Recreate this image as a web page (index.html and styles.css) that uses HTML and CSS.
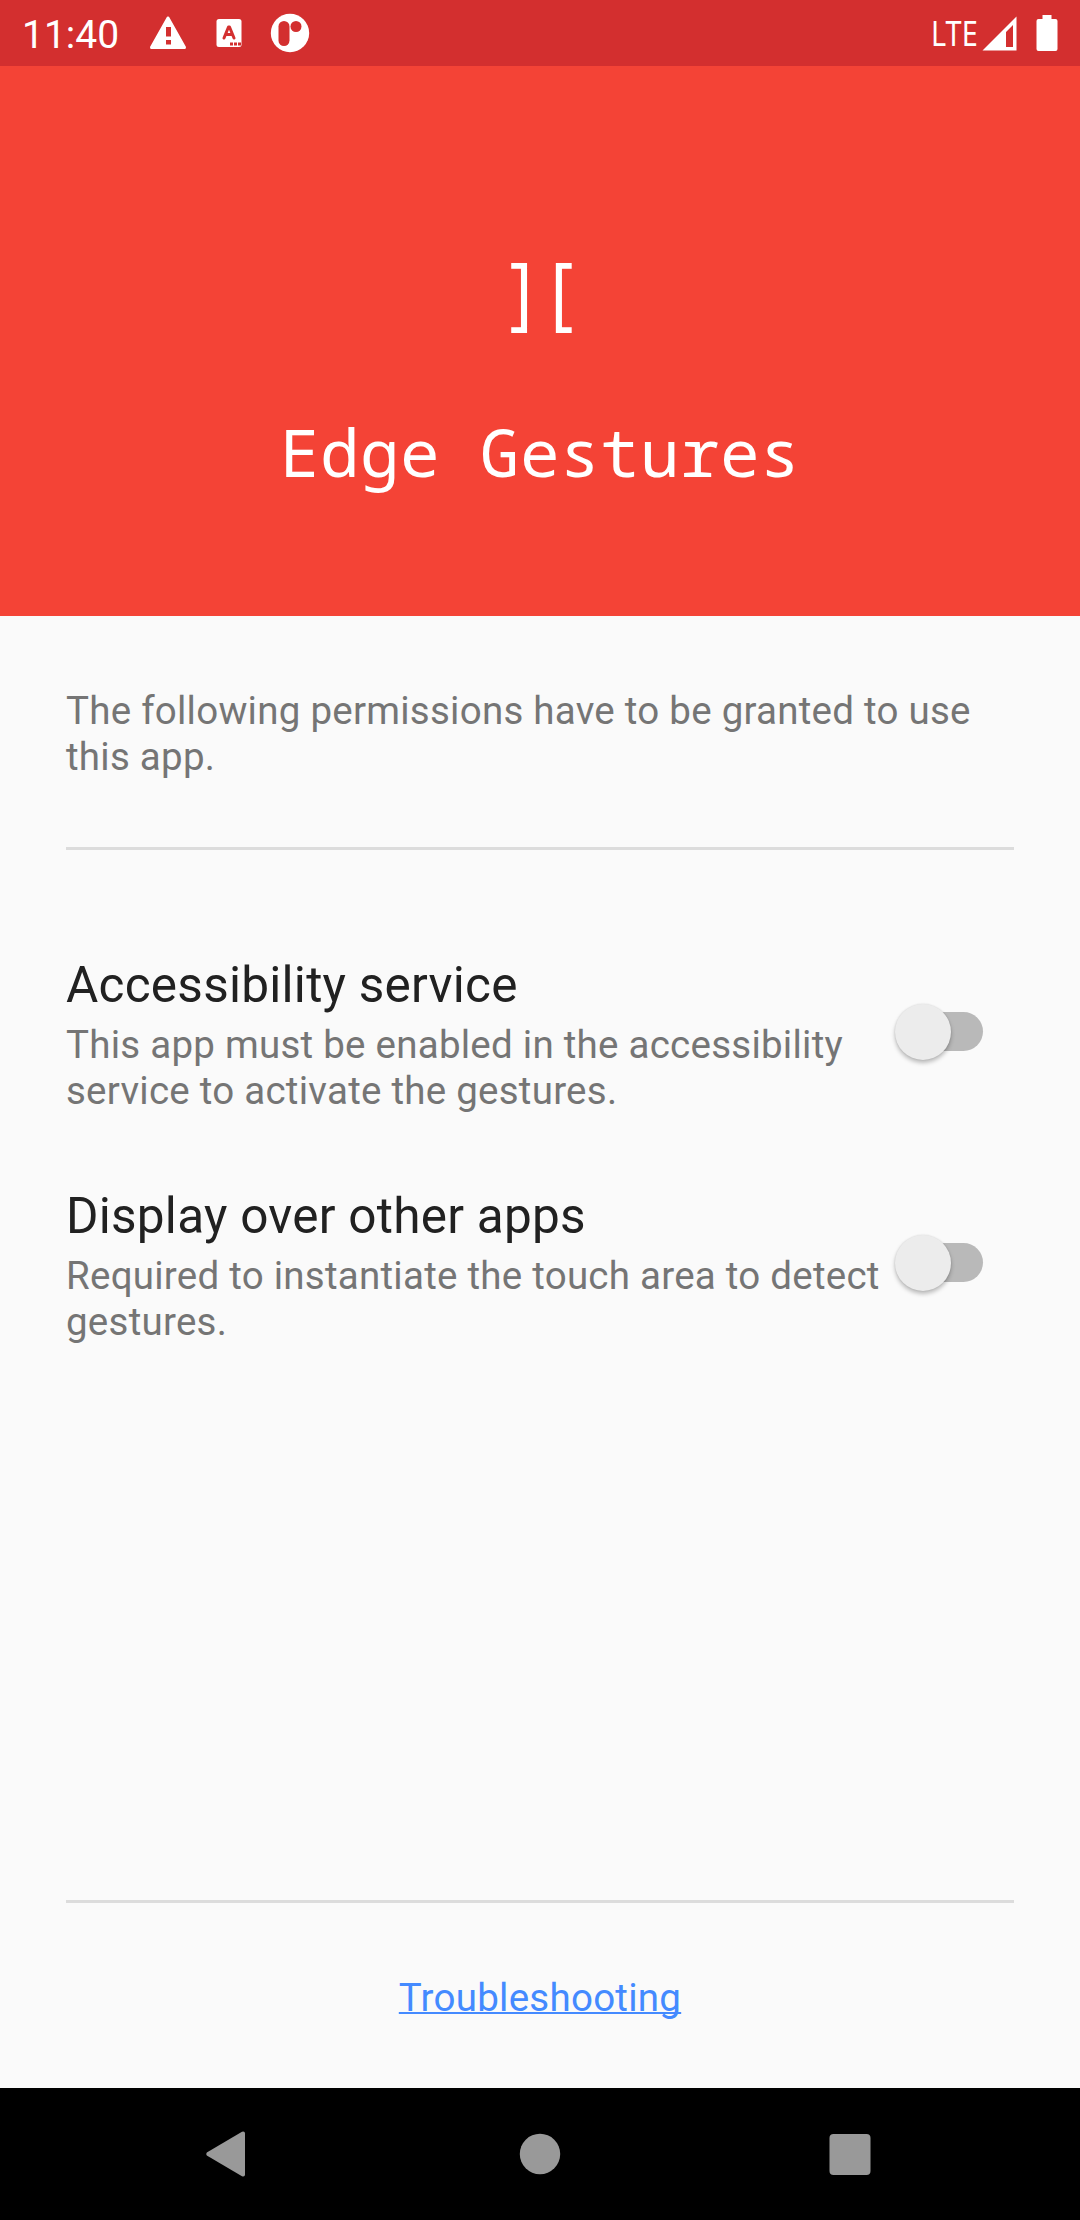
FILE: index.html
```html
<!DOCTYPE html>
<html lang="en">
<head>
<meta charset="utf-8">
<title>Edge Gestures</title>
<link rel="stylesheet" href="styles.css">
</head>
<body>
<div class="screen">
  <header class="status-bar">
    <span class="clock">11:40</span>
    <svg class="warning-icon" width="38" height="34" viewBox="0 0 38 34"><path fill="#fff" fill-rule="evenodd" d="M18 .8Q19 0 20 .8L37 31Q37 33 36 33H2Q1 33 1 31ZM17 11V20.500H22V11ZM17 24V28.500H22V24Z"/></svg>
    <svg class="input-icon" width="26" height="30" viewBox="0 0 26 30"><rect x=".5" y="1" width="25" height="28" rx="2.500" fill="#fff"/><path d="M8 20L12.500 9H13.500L18 20M10 16.500H16" fill="none" stroke="#d32f2f" stroke-width="3" stroke-linecap="round" stroke-linejoin="round"/><path d="M14 24.500H17V27.500H14ZM18 24.500H21V27.500H18ZM22 24.500H25V27.500H22Z" fill="#d32f2f"/></svg>
    <svg class="app-icon" width="40" height="40" viewBox="0 0 40 40"><circle cx="20" cy="20" r="19.200" fill="#fff"/><rect x="8.500" y="8" width="11" height="25" rx="5.500" fill="#d32f2f"/><circle cx="26" cy="13.500" r="5.500" fill="#d32f2f"/></svg>
    <span class="network">LTE</span>
    <svg class="signal-icon" width="35" height="35" viewBox="0 0 35 35"><path fill="#fff" fill-rule="evenodd" d="M34.500 .5V34.500H.5ZM31 9L24 16V31H31Z"/></svg>
    <svg class="battery-icon" width="22" height="36" viewBox="0 0 22 36"><path fill="#fff" d="M6.500 0H15.500V4H19.500Q21.500 4 21.500 6V34Q21.500 36 19.500 36H2.500Q.5 36 .5 34V6Q.5 4 2.500 4H6.500Z"/></svg>
  </header>
  <section class="hero">
    <div class="logo">][</div>
    <h1 class="app-name">Edge Gestures</h1>
  </section>
  <main class="content">
    <p class="intro">The following permissions have to be granted to use this app.</p>
    <hr class="divider">
    <div class="permissions">
      <div class="permission">
        <div class="permission-text">
          <h2 class="permission-title">Accessibility service</h2>
          <p class="permission-description">This app must be enabled in the accessibility service to activate the gestures.</p>
        </div>
        <div class="switch"><span class="thumb"></span></div>
      </div>
      <div class="permission">
        <div class="permission-text">
          <h2 class="permission-title">Display over other apps</h2>
          <p class="permission-description">Required to instantiate the touch area to detect gestures.</p>
        </div>
        <div class="switch"><span class="thumb"></span></div>
      </div>
    </div>
    <hr class="divider">
    <footer class="help"><a class="help-link" href="#">Troubleshooting</a></footer>
  </main>
  <nav class="nav-bar">
    <svg width="48" height="48" viewBox="0 0 48 48"><path fill="#999" d="M4.800 22.500Q3.600 24 4.800 25.500L40 46.200Q43 47 43 44.500V3.500Q43 1 40 1.800Z"/></svg>
    <svg class="home-icon" width="48" height="48" viewBox="0 0 48 48"><circle cx="24" cy="24" r="20.200" fill="#999"/></svg>
    <svg width="48" height="48" viewBox="0 0 48 48"><rect x="3.500" y="4" width="41" height="41" rx="4" fill="#999"/></svg>
  </nav>
</div>
</body>
</html>
```
FILE: styles.css
```css
* {
  box-sizing: border-box;
}

body,
h1,
h2,
p {
  margin: 0;
  font-weight: 400;
}

body {
  font-family: Roboto, "Liberation Sans", sans-serif;
  font-size: 38.5px;
  line-height: 46px;
  letter-spacing: 0.25px;
  color: #757575;
}

.screen {
  display: flex;
  flex-direction: column;
  width: 1080px;
  height: 2220px;
  background: #fafafa;
}

.status-bar {
  display: flex;
  align-items: center;
  height: 66px;
  padding: 0 22px;
  background: #d32f2f;
  color: #fff;
  letter-spacing: 0;
}

.clock {
  width: 127px;
  padding-top: 3px;
  font-size: 39px;
}

.input-icon {
  margin-left: 29px;
}

.app-icon {
  margin-left: 28px;
}

.network {
  width: 44px;
  margin-left: auto;
  font-family: "Noto Sans", sans-serif;
  font-size: 34px;
  transform: scaleX(0.85);
  transform-origin: left;
}

.signal-icon {
  margin-left: 7px;
}

.battery-icon {
  margin-left: 19px;
}

.hero {
  display: flex;
  flex-direction: column;
  align-items: center;
  height: 550px;
  padding-top: 173px;
  background: #f44336;
  color: #fff;
}

.logo {
  margin-right: -20px;
  font-family: "Noto Sans", sans-serif;
  font-size: 80px;
  line-height: 100px;
  letter-spacing: 20px;
  transform: scaleX(0.88);
}

.app-name {
  margin-top: 67px;
  font-family: "Noto Sans Mono", "DejaVu Sans Mono", monospace;
  font-size: 66px;
  line-height: 90px;
  letter-spacing: 0.4px;
}

.content {
  display: flex;
  flex: 1;
  flex-direction: column;
  padding: 72px 66px 0;
}

.divider {
  width: 100%;
  height: 3px;
  margin: 0;
  border: 0;
  background: #dcdcdc;
}

.intro {
  margin-bottom: 67px;
}

.permissions {
  flex: 1;
  padding-top: 106px;
}

.permission {
  display: flex;
  height: 231px;
}

.permission-text {
  width: 829px;
}

.permission-title {
  margin-bottom: 8px;
  font-size: 49.5px;
  line-height: 58px;
  color: #212121;
}

.permission-description {
  width: 820px;
}

.switch {
  display: flex;
  align-items: center;
  width: 84px;
  height: 39px;
  margin: 56px 0 0 4px;
  border-radius: 20px;
  background: #b9b9b9;
}

.thumb {
  flex: none;
  width: 56px;
  height: 56px;
  margin-left: -4px;
  border-radius: 50%;
  background: #ececec;
  box-shadow: 0 3px 4px rgba(0, 0, 0, 0.25), 0 0 2px rgba(0, 0, 0, 0.12);
}

.help {
  height: 185px;
  padding-top: 72px;
  text-align: center;
}

.help-link {
  color: #448aff;
  text-decoration-skip-ink: none;
  text-decoration-thickness: 2px;
}

.nav-bar {
  display: flex;
  align-items: center;
  justify-content: space-between;
  height: 132px;
  padding: 0 206px 0 202px;
  background: #000;
}

.home-icon {
  margin-left: 4px;
}
```
